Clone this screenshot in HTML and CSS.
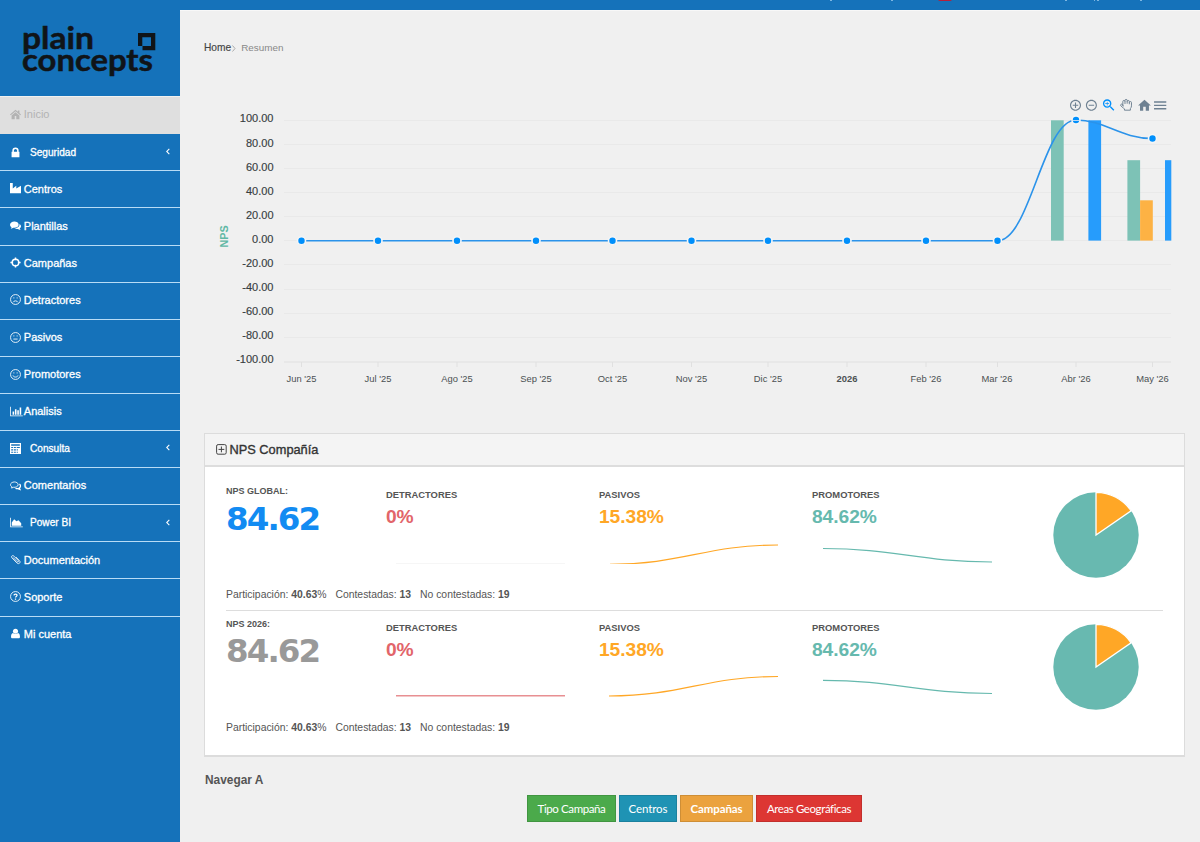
FILE: index.html
```html
<!DOCTYPE html>
<html lang="es">
<head>
    <meta charset="utf-8">
    <title>Resumen</title>
    <link rel="stylesheet" href="styles.css">
</head>
<body>
    <div class="topbar">
        <svg class="topbar-menu" width="380" height="10">
            <path d="M10 0h2M71 0h2M245 0h2M274 0h1M277 0h2M320 0h2" stroke="#9fcdf0" stroke-width="1.5"/>
            <rect x="118" y="-5" width="14" height="6" rx="2" fill="#b51f3a"/>
        </svg>
    </div>
    <div class="wrapper">
        <div class="sidebar">
            <div class="logo">
                <svg class="logo-top" width="75" height="30"><text x="-1" y="25" textLength="72" lengthAdjust="spacingAndGlyphs">plain</text></svg>
                <svg class="logo-square" width="18" height="18"><path d="M0 0h17.3v17.3H4.5v-4.3H13V4.2H4.3V13H0z"/></svg>
                <svg class="logo-bottom" width="135" height="26"><text x="-1" y="20" textLength="131" lengthAdjust="spacingAndGlyphs">concepts</text></svg>
            </div>
            <ul class="menu">
                <li class="active"><svg class="icon" viewBox="0 0 14 14"><path d="M7 1L0 7l1 1 6-5 6 5 1-1-2-1.8V2h-2v1.5zM7 4.2L2 8.400v4.600h4V9h2v4h4V8.400z"/></svg>Inicio</li>
                <li class="parent"><svg class="icon" viewBox="0 0 14 14"><path d="M3 6V4.500a4 4 0 0 1 8 0V6h1v7H2V6zm2 0h4V4.500a2 2 0 0 0-4 0z"/></svg>Seguridad<svg class="arrow" viewBox="0 0 6 10"><path d="M5 1L1 5l4 4"/></svg></li>
                <li><svg class="icon" viewBox="0 0 14 14"><path d="M0 0h3.500v7L8 3.500V7l6-3.500V13H0z"/></svg>Centros</li>
                <li><svg class="icon" viewBox="0 0 14 14"><path d="M5.500 2C2.500 2 0 3.700 0 6c0 1.300.8 2.400 2 3.100L1 11c1.500-.2 2.500-.7 3.200-1.200C8 10.200 11 8.500 11 6S8.500 2 5.500 2z"/><path d="M12 5c1.200.7 2 1.700 2 2.900 0 1.200-.7 2.100-1.700 2.800l1.200 1.800c-1.700-.1-2.800-.7-3.500-1.200-1.600.2-3.200-.1-4.300-.8C9.500 10.400 12.500 8.300 12 5z"/></svg>Plantillas</li>
                <li><svg class="icon line bold" viewBox="0 0 14 14"><circle cx="7" cy="7" r="4.200"/><path d="M7 .5V4M7 10v3.500M.5 7H4M10 7h3.500"/></svg>Campañas</li>
                <li><svg class="icon line" viewBox="0 0 14 14"><circle cx="7" cy="7" r="6.300"/><path d="M4 10.500c1-2.400 5-2.400 6 0M4.200 5h1.400M8.400 5h1.400"/></svg>Detractores</li>
                <li><svg class="icon line" viewBox="0 0 14 14"><circle cx="7" cy="7" r="6.300"/><path d="M4.300 9h5.400M4.200 5h1.400M8.400 5h1.400"/></svg>Pasivos</li>
                <li><svg class="icon line" viewBox="0 0 14 14"><circle cx="7" cy="7" r="6.300"/><path d="M3.800 8.300c1 2.600 5.400 2.600 6.400 0M4.200 5h1.400M8.400 5h1.400"/></svg>Promotores</li>
                <li><svg class="icon wide" viewBox="0 0 16 14"><path d="M0 1h1v11h15v1H0zM3 7h2v4H3zM6 4h2v7H6zM9 5.500h2V11H9zM12 2h2v9h-2z"/></svg>Analisis</li>
                <li class="parent"><svg class="icon" viewBox="0 0 14 14"><path fill-rule="evenodd" d="M0 0h14v14H0zM1.500 1.500v2h11v-2zM1.500 5v1.500H4V5zM5 5v1.500h2.500V5zM8.500 5v1.500H12.500V5zM1.500 8v1.500H4V8zM5 8v1.500h2.500V8zM8.500 8v1.500H10V8zM1.500 11v1.500H4V11zM5 11v1.500h2.500V11zM8.500 11v1.500H10V11z"/></svg>Consulta<svg class="arrow" viewBox="0 0 6 10"><path d="M5 1L1 5l4 4"/></svg></li>
                <li><svg class="icon line" viewBox="0 0 14 14"><path d="M5.500 2.500C3 2.500.6 4 .6 6c0 1.300.9 2.200 2 2.700L2 10.300l2.300-1C7.500 9.600 10.400 8.200 10.400 6S8 2.500 5.500 2.500z"/><path d="M12 5.200c2 1.500 1.800 3.800-.2 5l.8 1.800-2.600-1.100c-1 .2-2 .1-3-.2" stroke-width="1.600"/></svg>Comentarios</li>
                <li class="parent"><svg class="icon wide" viewBox="0 0 16 14"><path d="M0 1h1v11h15v1H0zM2 11V7l3-4 3 2.500L10.500 4 14 8v3z"/></svg>Power BI<svg class="arrow" viewBox="0 0 6 10"><path d="M5 1L1 5l4 4"/></svg></li>
                <li><svg class="icon line" viewBox="0 0 14 14"><path d="M4 4.500l5 5.200c1.200 1.200 2.600-.3 1.500-1.400L5 2.700C3.200.9.8 3.200 2.600 5l6.200 6.400c2.400 2.300 5.500-.6 3.200-3L7.500 3.800"/></svg>Documentación</li>
                <li><svg class="icon line" viewBox="0 0 14 14"><circle cx="7" cy="7" r="6.300"/><path stroke-width="1.600" d="M5 5.600C5.200 3.200 9 3.400 9 5.500 9 7 7 6.800 7 8.300M7 9.500V11"/></svg>Soporte</li>
                <li><svg class="icon" viewBox="0 0 14 14"><circle cx="7" cy="4" r="3.200"/><path d="M3.800 6.500C2 7 1.300 9 1.300 11c0 1.300.7 2 1.700 2h8c1 0 1.700-.7 1.700-2 0-2-.7-4-2.500-4.500-1.800 1.700-4.600 1.700-6.400 0z"/></svg>Mi cuenta</li>
            </ul>
        </div>
        <div class="main">
            <div class="breadcrumb"><span class="home">Home</span><svg width="4" height="7" viewBox="0 0 4 7"><path d="M.5.5l2.500 3-2.500 3" fill="none" stroke="#aaa"/></svg><span>Resumen</span></div>

            <!-- NPS evolution chart -->
            <svg class="chart" width="1020" height="320" viewBox="180 90 1020 320">
                <g class="grid">
                    <path d="M284 120.500h887M284 144.500h887M284 168.500h887M284 192.500h887M284 216.500h887M284 240.500h887M284 264.500h887M284 289.500h887M284 313.500h887M284 337.500h887"/>
                    <path class="axis" d="M284 362h887M301.500 362v5M378 362v5M457 362v5M536 362v5M612.500 362v5M691.500 362v5M768 362v5M847 362v5M926 362v5M997.500 362v5M1076 362v5M1152.500 362v5"/>
                </g>
                <g class="ylabels">
                    <text x="273.500" y="122.300">100.00</text>
                    <text x="273.500" y="146.500">80.00</text>
                    <text x="273.500" y="170.500">60.00</text>
                    <text x="273.500" y="194.500">40.00</text>
                    <text x="273.500" y="218.600">20.00</text>
                    <text x="273.500" y="242.700">0.00</text>
                    <text x="273.500" y="266.800">-20.00</text>
                    <text x="273.500" y="290.800">-40.00</text>
                    <text x="273.500" y="314.800">-60.00</text>
                    <text x="273.500" y="339">-80.00</text>
                    <text x="273.500" y="363.100">-100.00</text>
                </g>
                <text class="ytitle" transform="translate(228.300 236.500) rotate(-90)">NPS</text>
                <g class="xlabels">
                    <text x="301.500" y="381.500">Jun '25</text>
                    <text x="378" y="381.500">Jul '25</text>
                    <text x="457" y="381.500">Ago '25</text>
                    <text x="536" y="381.500">Sep '25</text>
                    <text x="612.500" y="381.500">Oct '25</text>
                    <text x="691.500" y="381.500">Nov '25</text>
                    <text x="768" y="381.500">Dic '25</text>
                    <text class="year" x="847" y="381.500">2026</text>
                    <text x="926" y="381.500">Feb '26</text>
                    <text x="997" y="381.500">Mar '26</text>
                    <text x="1076" y="381.500">Abr '26</text>
                    <text x="1152.500" y="381.500">May '26</text>
                </g>
                <g class="bars">
                    <rect class="pro" x="1051" y="120.300" width="12.700" height="120.300"/>
                    <rect class="nps" x="1088.400" y="120.300" width="12.700" height="120.300"/>
                    <rect class="pro" x="1127.400" y="160.200" width="12.700" height="80.400"/>
                    <rect class="pas" x="1140.100" y="200.300" width="12.700" height="40.300"/>
                    <rect class="nps" x="1165" y="160.200" width="6.300" height="80.400"/>
                </g>
                <path class="serie" d="M301.500 240.700H997.500C1030 240.700 1043 120 1076 120C1105 120 1120 138.500 1152.500 138.500"/>
                <g class="markers">
                    <circle cx="301.500" cy="240.700" r="4"/>
                    <circle cx="378" cy="240.700" r="4"/>
                    <circle cx="457" cy="240.700" r="4"/>
                    <circle cx="536" cy="240.700" r="4"/>
                    <circle cx="612.500" cy="240.700" r="4"/>
                    <circle cx="691.500" cy="240.700" r="4"/>
                    <circle cx="768" cy="240.700" r="4"/>
                    <circle cx="847" cy="240.700" r="4"/>
                    <circle cx="926" cy="240.700" r="4"/>
                    <circle cx="997.500" cy="240.700" r="4"/>
                    <circle cx="1076" cy="120" r="4"/>
                    <circle cx="1152.500" cy="138.500" r="4"/>
                </g>
                <path d="M1073 120.500h6" stroke="#b9d9f5"/>
                <g class="tools">
                    <path transform="translate(1068.900 98.700) scale(.55)" d="M13 7h-2v4H7v2h4v4h2v-4h4v-2h-4V7zm-1-5C6.480 2 2 6.480 2 12s4.480 10 10 10 10-4.480 10-10S17.520 2 12 2zm0 18c-4.410 0-8-3.590-8-8s3.590-8 8-8 8 3.590 8 8-3.590 8-8 8z"/>
                    <path transform="translate(1084.800 98.700) scale(.55)" d="M7 11v2h10v-2H7zm5-9C6.480 2 2 6.480 2 12s4.480 10 10 10 10-4.480 10-10S17.520 2 12 2zm0 18c-4.410 0-8-3.590-8-8s3.590-8 8-8 8 3.590 8 8-3.590 8-8 8z"/>
                    <path class="selected" transform="translate(1101 97.400) scale(.65)" d="M15.500 14h-.79l-.28-.27C15.410 12.590 16 11.110 16 9.500 16 5.910 13.090 3 9.500 3S3 5.910 3 9.500 5.910 16 9.500 16c1.610 0 3.090-.59 4.230-1.570l.27.28v.79l5 4.990L20.490 19l-4.990-5zm-6 0C7.010 14 5 11.990 5 9.500S7.010 5 9.500 5 14 7.010 14 9.500 11.990 14 9.500 14zM12.500 10h-2.500v2.500H9V10H6.500V9H9V6.500h1V9h2.500z"/>
                    <path class="hand" transform="translate(1119.600 98.300) scale(.54)" d="M18 11V6a2 2 0 0 0-4 0M14 10V4a2 2 0 0 0-4 0v2M10 10.500V6a2 2 0 0 0-4 0v8M18 8a2 2 0 1 1 4 0v6a8 8 0 0 1-2 5v3H9v-2.500c-1-.5-1.500-1-2-1.500l-4.600-3.940a2 2 0 0 1 2.830-2.820L7 15"/>
                    <path transform="translate(1136.800 97.900) scale(.64)" d="M10 20v-6h4v6h5v-8h3L12 3 2 12h3v8z"/>
                    <path transform="translate(1152 97.200) scale(.68)" d="M3 18h18v-2H3v2zm0-5h18v-2H3v2zm0-7v2h18V6H3z"/>
                </g>
            </svg>

            <div class="card">
                <div class="card-header">
                    <svg width="11" height="11" viewBox="0 0 11 11"><rect x=".6" y=".6" width="9.600" height="9.600" rx="1.500"/><path d="M5.400 2.500v5.800M2.500 5.400h5.800"/></svg>
                    NPS Compañía
                </div>
                <div class="card-body">
                    <div class="nps-row">
                        <div class="cols">
                            <div class="total"><h5>NPS GLOBAL:</h5><div class="score">84.62</div></div>
                            <div class="metric red"><h6>DETRACTORES</h6><div class="value">0%</div><svg width="200" height="29"><path d="M10 29h169" stroke="#eee"/></svg></div>
                            <div class="metric orange"><h6>PASIVOS</h6><div class="value">15.38%</div><svg width="200" height="29"><path d="M11 29.300C83 29.300 107 10 179 10"/></svg></div>
                            <div class="metric green"><h6>PROMOTORES</h6><div class="value">84.62%</div><svg width="200" height="29"><path d="M11 13.500C83 13.500 107 27 180 27"/></svg></div>
                            <svg class="pie" width="88" height="88" viewBox="-44 -44 88 88"><circle r="42.700"/><path d="M0 0V-42.700A42.700 42.700 0 0 1 35.100 -24.200z"/></svg>
                        </div>
                        <p>Participación: <b>40.63</b>% <span>Contestadas: <b>13</b></span> <span>No contestadas: <b>19</b></span></p>
                    </div>
                    <div class="nps-row year-row">
                        <div class="cols">
                            <div class="total"><h5>NPS 2026:</h5><div class="score">84.62</div></div>
                            <div class="metric red"><h6>DETRACTORES</h6><div class="value">0%</div><svg width="200" height="32"><rect x="10" y="28" width="169" height="1.500" fill="#e88f92" stroke="none"/></svg></div>
                            <div class="metric orange"><h6>PASIVOS</h6><div class="value">15.38%</div><svg width="200" height="32"><path d="M10 29C83 29 107 9.500 179 9.500"/></svg></div>
                            <div class="metric green"><h6>PROMOTORES</h6><div class="value">84.62%</div><svg width="200" height="32"><path d="M11 13.300C83 13.300 107 26.500 180 26.500"/></svg></div>
                            <svg class="pie" width="88" height="88" viewBox="-44 -44 88 88"><circle r="42.700"/><path d="M0 0V-42.700A42.700 42.700 0 0 1 35.100 -24.200z"/></svg>
                        </div>
                        <p>Participación: <b>40.63</b>% <span>Contestadas: <b>13</b></span> <span>No contestadas: <b>19</b></span></p>
                    </div>
                </div>
            </div>

            <h4>Navegar A</h4>
            <div class="buttons">
                <button type="button" class="btn-success">Tipo Campaña</button>
                <button type="button" class="btn-info">Centros</button>
                <button type="button" class="btn-warning">Campañas</button>
                <button type="button" class="btn-danger">Areas Geográficas</button>
            </div>
        </div>
    </div>
</body>
</html>
```
FILE: styles.css
```css
* {
    box-sizing: border-box;
}
body {
    margin: 0;
    height: 842px;
    overflow: hidden;
    background: #f0f0f0;
    font-family: "Liberation Sans", Arial, sans-serif;
    font-size: 11px;
    color: #555;
}
svg {
    display: block;
    flex-shrink: 0;
}
.topbar {
    height: 10px;
    background: #1572ba;
    display: flex;
    justify-content: flex-end;
}
.wrapper {
    display: flex;
    height: 832px;
}

/* Sidebar */
.sidebar {
    width: 180px;
    flex-shrink: 0;
    background: #1572ba;
}
.logo {
    height: 86px;
    padding: 14px 0 0 23px;
    display: grid;
    grid-template-columns: 114.5px 20px;
    grid-template-rows: 27px 26px;
}
.logo svg {
    overflow: visible;
}
.logo text {
    font-family: Lato, sans-serif;
    font-size: 31px;
    font-weight: 700;
    fill: #101418;
    stroke: #101418;
    stroke-width: 0.500;
}
.logo-square {
    margin-top: 8.700px;
    fill: #101418;
}
.logo-bottom {
    grid-column: 1 / 3;
}
.menu {
    list-style: none;
    margin: 0;
    padding: 0;
}
.menu li {
    display: flex;
    align-items: center;
    height: 37.100px;
    padding: 0 10px 1.500px 9.500px;
    border-top: 1px solid #b8dcf6;
    color: #fff;
    font-size: 11px;
    -webkit-text-stroke: 0.300px #fff;
}
.menu li.active {
    height: 38px;
    padding-bottom: 3px;
    background: #dfdfdf;
    border-color: #f0f0f0;
    color: #b3b3b3;
    -webkit-text-stroke: 0;
}
.menu li.active + li {
    height: 36.400px;
    border-top: none;
    padding-bottom: 0;
}
.menu li.parent {
    font-size: 10.100px;
}
.icon {
    width: 11px;
    height: 11px;
    margin-right: 3.300px;
    fill: currentColor;
}
.icon.wide {
    width: 13px;
    margin-right: 1.300px;
}
.icon.line {
    fill: none;
    stroke: currentColor;
    stroke-width: 1.100;
}
.icon.bold {
    stroke-width: 1.900;
}
.parent .icon {
    margin-right: 9.500px;
}
.parent .icon.wide {
    margin-right: 7.500px;
}
.arrow {
    width: 4px;
    height: 7px;
    margin: 0 0 1px auto;
    fill: none;
    stroke: #fff;
    stroke-width: 1.600;
}

/* Content */
.main {
    flex: 1;
    border-top: 1px solid #f8f8f8;
}
.breadcrumb {
    display: flex;
    align-items: center;
    height: 13px;
    margin: 30px 0 0 24px;
    font-size: 9.900px;
    color: #888;
}
.breadcrumb svg {
    margin: 1px 5px 0 1px;
}
.home {
    color: #444;
    font-size: 10.200px;
    -webkit-text-stroke: 0.150px #444;
}
.chart {
    margin-top: 36px;
}
.grid path {
    stroke: #e9e9e9;
    fill: none;
}
.grid .axis {
    stroke: #e0e0e0;
}
.ylabels text {
    font-size: 11px;
    text-anchor: end;
    fill: #373d3f;
    stroke: #373d3f;
    stroke-width: 0.150;
}
.xlabels text {
    font-size: 9.400px;
    text-anchor: middle;
    fill: #4c5153;
}
.xlabels .year {
    font-weight: bold;
}
.ytitle {
    font-size: 10.800px;
    font-weight: bold;
    text-anchor: middle;
    fill: #5fb8a5;
}
.bars .pro {
    fill: #7dc2b6;
}
.bars .pas {
    fill: #fdb244;
}
.bars .nps {
    fill: #269cfc;
}
.serie {
    fill: none;
    stroke: #2b93ea;
    stroke-width: 1.600;
}
.markers circle {
    fill: #008ffb;
    stroke: #f6f6f6;
    stroke-width: 1.600;
}
.tools path {
    fill: #6e8192;
}
.tools .selected {
    fill: #008ffb;
}
.tools .hand {
    fill: none;
    stroke: #6e8192;
    stroke-width: 1.800;
}

/* NPS card */
.card {
    width: 981px;
    height: 324px;
    margin: 23px 0 0 24px;
    border: 1px solid #dcdcdc;
    border-bottom-width: 2px;
    background: #fff;
}
.card-header {
    display: flex;
    align-items: center;
    gap: 2.500px;
    height: 33px;
    padding: 0 0 1px 11px;
    background: #f4f4f4;
    border-bottom: 2px solid #ddd;
    font-size: 12.800px;
    color: #333;
    -webkit-text-stroke: 0.350px #333;
}
.card-header svg {
    fill: none;
    stroke: #444;
    stroke-width: 1;
}
.card-body {
    padding: 0 21px;
}
.nps-row {
    height: 144px;
    border-bottom: 1px solid #ddd;
}
.year-row {
    height: 132px;
    border-bottom: none;
}
.cols {
    display: flex;
    height: 121px;
    padding-top: 20px;
}
.year-row .cols {
    height: 109.500px;
    padding-top: 9px;
}
.total {
    width: 160px;
}
h5, h6 {
    margin: 0;
    color: #555;
}
h5 {
    font-size: 9px;
    line-height: 10px;
    margin-top: -1px;
}
.score {
    margin-top: 4px;
    font-family: "DejaVu Sans", Verdana, sans-serif;
    font-size: 32.500px;
    font-weight: bold;
    letter-spacing: -1.900px;
    line-height: 38px;
    color: #128bf2;
}
.year-row .score {
    margin-top: 3px;
    color: #999;
}
.metric {
    width: 213px;
}
h6 {
    font-size: 9.400px;
    line-height: 12px;
    margin-top: 2px;
}
.value {
    margin-top: 5px;
    font-size: 19.200px;
    font-weight: bold;
    line-height: 22px;
    letter-spacing: -0.050px;
}
.metric svg {
    margin-top: 7px;
    fill: none;
    stroke: currentColor;
    stroke-width: 1.200;
}
.year-row .metric svg {
    margin-top: 6px;
}
.red {
    color: #e2656a;
}
.orange {
    color: #ffa726;
}
.green {
    color: #66b9ae;
}
.pie {
    margin: 4px 0 0 26.500px;
}
.year-row .pie {
    margin-top: 3px;
}
.pie circle {
    fill: #68b9b0;
}
.pie path {
    fill: #ffa726;
    stroke: #fff;
    stroke-width: 1.300;
}
.nps-row p {
    margin: 0;
    font-size: 10.400px;
    line-height: 14px;
}
.nps-row p span {
    margin-left: 6px;
}
h4 {
    margin: 16px 0 0 25px;
    font-size: 11.900px;
    line-height: 14px;
}
.buttons {
    display: flex;
    gap: 3px;
    margin: 8px 0 0 347px;
}
button {
    width: 89px;
    height: 27px;
    padding: 0 0 1px;
    border: 1px solid rgba(0, 0, 0, 0.120);
    color: #fff;
    font-family: Lato, sans-serif;
    font-size: 11.500px;
    letter-spacing: -0.400px;
}
.btn-success {
    background: #4baa4b;
}
.btn-info {
    width: 58px;
    background: #1f93b4;
    letter-spacing: -0.100px;
}
.btn-warning {
    width: 73px;
    background: #eba23e;
    font-weight: bold;
    letter-spacing: -0.100px;
}
.btn-danger {
    width: 106px;
    background: #dd3633;
}
```
